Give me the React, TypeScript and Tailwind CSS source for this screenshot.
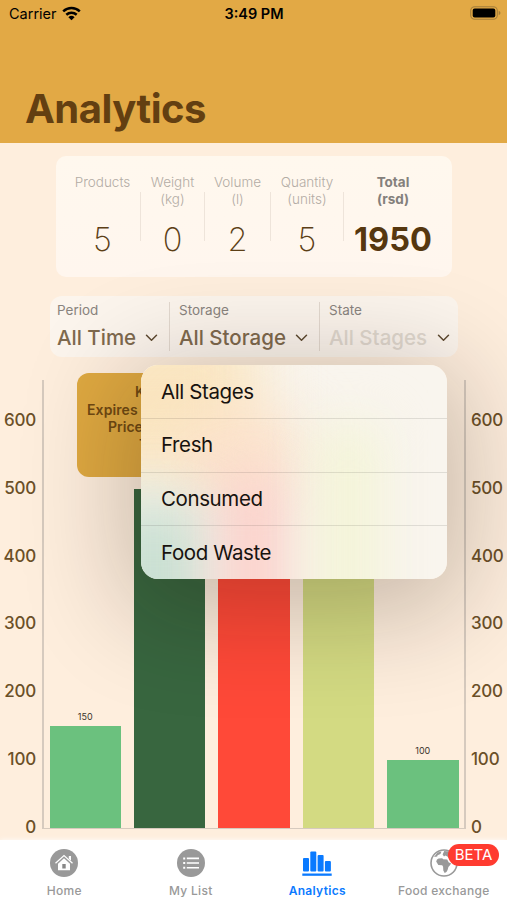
import { useState } from "react";
import type { ReactNode } from "react";

const stats = [
  { label: "Products", unit: "", value: "5", width: "w-[76px]" },
  { label: "Weight", unit: "(kg)", value: "0", width: "w-[64px]" },
  { label: "Volume", unit: "(l)", value: "2", width: "w-[66px]" },
  { label: "Quantity", unit: "(units)", value: "5", width: "w-[73px]" },
];

const ticks = [600, 500, 400, 300, 200, 100, 0];

const bars = [
  { value: 150, color: "bg-[#6bc17e]", label: true },
  { value: 500, color: "bg-[#38663f]", label: false },
  { value: 600, color: "bg-[#ff4938]", label: false },
  { value: 600, color: "bg-[#d3da82]", label: false },
  { value: 100, color: "bg-[#6bc17e]", label: true },
];

const stages = ["All Stages", "Fresh", "Consumed", "Food Waste"];

// Pixels per unit on the value axis
const SCALE = 0.678;

function StatusBar() {
  return (
    <div className="flex items-center justify-between h-[28px] pl-[9px] pr-[6px] text-black">
      <div className="flex items-center gap-[5px] w-[180px] text-[14.5px]">
        <span>Carrier</span>
        <svg width="19" height="15" viewBox="0 0 19 15" fill="none" stroke="currentColor" strokeWidth="2.5" className="-mt-[2px]">
          <path d="M1.2 5.3C6 .8 13 .8 17.8 5.3" />
          <path d="M4.3 8.7C7.3 6 11.7 6 14.7 8.7" />
          <path d="M6.4 11.2Q9.5 8.5 12.6 11.2L9.5 14.3Z" fill="currentColor" stroke="none" />
        </svg>
      </div>
      <span className="-ml-[2px] text-[14.5px] font-semibold">3:49 PM</span>
      <div className="w-[180px] flex justify-end">
        <svg width="31" height="14" viewBox="0 0 31 14" className="-mt-[2px]">
          <rect x="0.7" y="0.7" width="26.6" height="12.6" rx="4" fill="none" stroke="#a47e3a" strokeWidth="1.1" />
          <rect x="2.7" y="2.6" width="22.6" height="8.8" rx="2" fill="#000" />
          <path d="M28.7 4.8Q30.5 5.5 30.5 7T28.7 9.2Z" fill="#a47e3a" />
        </svg>
      </div>
    </div>
  );
}

function StatsCard() {
  return (
    <section className="flex w-[396px] h-[121px] ml-[56px] mt-[13px] pl-[9px] rounded-[10px] bg-gradient-to-b from-[#fff8ee] to-[#fff6ee]">
      {stats.map((s) => (
        <div key={s.label} className={`flex shrink-0 ${s.width}`}>
          <div className="flex-1 flex flex-col items-center pt-[18px] text-[13.5px] leading-[17px] font-light text-[#b3aca5]">
            <span className="whitespace-nowrap">{s.label}</span>
            <span className="h-[17px]">{s.unit}</span>
            <span className="mt-[13px] text-[32.5px] leading-[38px] font-extralight text-[#5c3f16]">{s.value}</span>
          </div>
          <div className="w-px h-[49px] mt-[36px] bg-[#eee4da]" />
        </div>
      ))}
      <div className="flex flex-col items-center w-[98px] pt-[18px] text-[13.5px] leading-[17px] font-bold text-[#84807c]">
        <span>Total</span>
        <span>(rsd)</span>
        <span className="mt-[13px] text-[32.5px] leading-[38px] text-[#56370f]">1950</span>
      </div>
    </section>
  );
}

function Filter({ label, value, className, faded }: { label: string; value: string; className: string; faded?: boolean }) {
  return (
    <div className={`flex flex-col pt-[6px] ${className}`}>
      <span className="text-[13.5px] leading-[16px] text-[#8a847e]">{label}</span>
      <div className="flex items-center justify-between mt-[7px]">
        <span
          className={`text-[20.5px] leading-[26px] font-medium whitespace-nowrap ${
            faded ? "text-[#e0d8ce]" : "text-[#7f6a4e]"
          }`}
        >
          {value}
        </span>
        <svg width="13" height="8" viewBox="0 0 13 8" fill="none" stroke="#5e4a30" strokeWidth="1.5" strokeLinecap="round" strokeLinejoin="round">
          <path d="M1.5 1.3L6.5 6.3L11.5 1.3" />
        </svg>
      </div>
    </div>
  );
}

function AxisLabels({ side }: { side: "left" | "right" }) {
  return (
    <div
      className={`flex flex-col justify-between h-[457px] pt-[30px] text-[17px] leading-[20px] font-medium tracking-[-0.2px] text-[#6b5028] ${
        side === "left" ? "w-[42px] pr-[6px] text-right" : "w-[41px] pl-[5px] text-left"
      }`}
    >
      {ticks.map((t) => (
        <span key={t}>{t}</span>
      ))}
    </div>
  );
}

function Chart() {
  return (
    <section className="relative flex h-[449px] mt-[23px]">
      <AxisLabels side="left" />
      <div className="flex items-end justify-between flex-1 pl-[5.5px] pr-[5.5px] border-x-2 border-b border-[#d6cabe]">
        {bars.map((b, i) => (
          <div key={i} className="flex flex-col items-center w-[71.5px]">
            {b.label && <span className="mb-[4px] text-[9px] leading-[11px] text-[#3c342b]">{b.value}</span>}
            <div className={`w-full ${b.color}`} style={{ height: b.value * SCALE }} />
          </div>
        ))}
      </div>
      <AxisLabels side="right" />
      {/* Product marker for the selected bar */}
      <div className="absolute left-[77px] top-[-7px] w-[184px] h-[104px] pt-[10px] rounded-[12px] bg-[#dfa941] text-[14px] leading-[17.5px] font-semibold text-[#704a12]">
        <p className="pl-[58px]">K</p>
        <p className="pl-[10px] tracking-[0.1px]">Expires</p>
        <p className="pl-[31px]">Price</p>
        <p className="pl-[62px]">T</p>
      </div>
    </section>
  );
}

function StageMenu({ onSelect }: { onSelect: (stage: string) => void }) {
  return (
    <div className="absolute left-[141px] top-[365px] w-[306px] h-[214px] rounded-[17px] shadow-[0_18px_105px_16px_rgba(25,12,0,0.24)]">
      <div className="relative w-full h-full overflow-hidden rounded-[17px] bg-[#f9f5ee]">
        {/* Frosted tint of the bars and marker behind the menu */}
        <div className="absolute left-[-70px] top-[-40px] w-[185px] h-[150px] bg-[#fae5bf] blur-[30px]" />
        <div className="absolute left-[40px] top-[45px] w-[120px] h-[90px] rounded-full bg-[#fce2cc] blur-[30px]" />
        <div className="absolute left-[-40px] top-[140px] w-[105px] h-[160px] bg-[#c9dfd2] blur-[28px]" />
        <div className="absolute left-[80px] top-[110px] w-[66px] h-[190px] bg-[#fbcfc9] blur-[26px]" />
        <div className="absolute left-[176px] top-[60px] w-[62px] h-[240px] bg-[#f3f4d6] blur-[26px]" />
        <ul className="relative flex flex-col h-full">
          {stages.map((stage) => (
            <li key={stage} className="flex-1 border-b border-black/10 last:border-b-0">
              <button
                onClick={() => onSelect(stage)}
                className="w-full h-full pl-[20px] pt-[1px] text-left text-[20.5px] tracking-[-0.4px] text-[#17130f]"
              >
                {stage}
              </button>
            </li>
          ))}
        </ul>
      </div>
    </div>
  );
}

const HomeIcon = () => (
  <svg width="28" height="28" viewBox="0 0 28 28">
    <circle cx="14" cy="14" r="14" fill="#999" />
    <path d="M5.5 14.3L14 6.6L22.5 14.3" fill="none" stroke="#fff" strokeWidth="1.3" />
    <path d="M18.8 7H21V11.7L18.8 9.7Z" fill="#fff" />
    <path d="M8 14.7L14 9.3L20 14.7V21.3H8Z" fill="#fff" />
    <rect x="12.3" y="15" width="3.4" height="4.5" fill="#888" />
  </svg>
);

const ListIcon = () => (
  <svg width="28" height="28" viewBox="0 0 28 28">
    <circle cx="14" cy="14" r="14" fill="#999" />
    <path d="M9.8 9.4H22M9.8 14H22M9.8 18.8H22" stroke="#fff" strokeWidth="1.6" />
    <path d="M6.2 9.4H8.2M6.2 14H8.2M6.2 18.8H8.2" stroke="#fff" strokeWidth="2" />
  </svg>
);

const ChartIcon = () => (
  <svg width="30" height="28" viewBox="0 0 30 28" fill="#0a7aff">
    <rect x="1" y="9" width="6" height="13.5" rx="1" />
    <rect x="8.3" y="2.5" width="6" height="20" rx="1" />
    <rect x="15.6" y="6" width="6" height="16.5" rx="1" />
    <rect x="22.9" y="12" width="6" height="10.5" rx="1" />
    <rect x="0.3" y="24.5" width="29.4" height="2.3" />
  </svg>
);

// Globe turned towards Africa and Europe
const GlobeIcon = () => (
  <svg width="28" height="28" viewBox="0 0 28 28">
    <circle cx="14" cy="14" r="13" fill="#fff" stroke="#999" strokeWidth="1.6" />
    <path d="M6.2 12.6Q6.6 10.2 8.6 9.6L12.2 9.2L13.2 10.3L17.2 10.4L18.8 13.6L21 14.2Q20.4 16.4 18.4 18L17.6 21Q16.4 24 14.7 24L13.3 21.4L13.1 17.7L12.2 16.2L8.3 16Z" fill="#999" />
    <path d="M4 8L7.5 3.6L11.5 2.6L10.4 5L7.6 6.2L7.2 7.6Z" fill="#999" />
    <path d="M12.6 5.4L14.2 2L19 2.4L23.6 6L25.6 11L24 12.4L21.6 9.6L18.6 9L17.4 7.4L15.4 6.4L14 7.6Z" fill="#999" />
  </svg>
);

function Tab({ icon, label, active }: { icon: ReactNode; label: string; active?: boolean }) {
  return (
    <button className="relative flex-1 flex flex-col items-center pt-[9px]">
      {icon}
      <span
        className={`mt-[6px] text-[12px] leading-[16px] tracking-[0.3px] whitespace-nowrap ${
          active ? "font-semibold text-[#0a7aff]" : "font-medium text-[#999]"
        }`}
      >
        {label}
      </span>
    </button>
  );
}

export default function App() {
  const [open, setOpen] = useState(true);
  const [stage, setStage] = useState("All Stages");

  return (
    <div className="relative flex flex-col w-[507px] h-[900px] overflow-hidden bg-[#feeedd] font-['Inter',sans-serif]">
      <header className="h-[143px] shrink-0 bg-[#e2a945]">
        <StatusBar />
        <h1 className="mt-[56px] ml-[25px] text-[40px] leading-[50px] font-bold tracking-[-0.5px] text-[#633f11]">Analytics</h1>
      </header>

      <StatsCard />

      <section className="flex items-center w-[408px] h-[61px] shrink-0 ml-[50px] mt-[19px] rounded-[12px] bg-[#fcf5ed]">
        <Filter label="Period" value="All Time" className="w-[119px] pl-[7px] pr-[11px] h-full" />
        <div className="w-px h-[49px] bg-[#e3d9cf]" />
        <Filter label="Storage" value="All Storage" className="w-[149px] pl-[9px] pr-[11px] h-full" />
        <div className="w-px h-[49px] bg-[#e3d9cf]" />
        <div className="flex-1 h-full cursor-pointer" onClick={() => setOpen((v) => !v)}>
          <Filter label="State" value={stage} className="pl-[9px] pr-[8px]" faded={open} />
        </div>
      </section>

      <Chart />

      <nav className="relative flex h-[60px] shrink-0 mt-[11px] pl-px bg-white shadow-[0_0_5px_rgba(255,255,255,0.9)]">
        <Tab icon={<HomeIcon />} label="Home" />
        <Tab icon={<ListIcon />} label="My List" />
        <Tab icon={<ChartIcon />} label="Analytics" active />
        <Tab icon={<GlobeIcon />} label="Food exchange" />
        <span className="absolute left-[448px] top-[4px] w-[51px] h-[22px] rounded-full bg-[#ff3b30] text-center text-[15px] leading-[22px] text-white">
          BETA
        </span>
      </nav>

      {open && (
        <StageMenu
          onSelect={(s) => {
            setStage(s);
            setOpen(false);
          }}
        />
      )}
    </div>
  );
}
